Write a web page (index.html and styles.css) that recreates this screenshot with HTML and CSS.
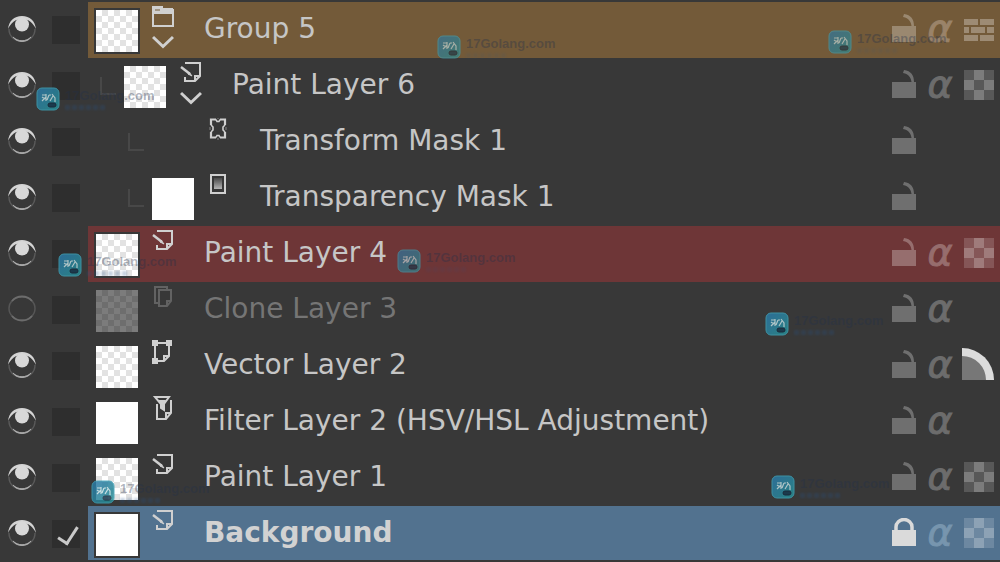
FILE: index.html
```html
<!DOCTYPE html>
<html lang="en">
<head>
<meta charset="utf-8">
<title>Layers</title>
<link rel="stylesheet" href="styles.css">
</head>
<body>
<svg class="defs" aria-hidden="true">
  <defs>
    <linearGradient id="fade" x1="0" y1="0" x2="0" y2="1"><stop offset="0" stop-color="#4a4a4a"/><stop offset="1" stop-color="#b5b5b5"/></linearGradient>
    <linearGradient id="badge" x1="0" y1="0" x2="1" y2="1"><stop offset="0" stop-color="#2c77a8"/><stop offset="1" stop-color="#278f91"/></linearGradient>
    <symbol id="eye" viewBox="0 0 28 28">
      <path d="M0 14C1 6 6 1 14 1s13 5 14 13C25 8 21 4 14 4S3 8 0 14z" fill="#d4d4d4"/>
      <path d="M1 14c0 7 5 12 13 12s13-5 13-12" fill="none" stroke="#5a5a5a" stroke-width="1.4"/>
      <path d="M5 22c5 5 13 5 18 0-4 6-14 6-18 0z" fill="#aaa" stroke="#aaa"/>
      <circle cx="14" cy="9.5" r="7" fill="#d8d8d8"/>
    </symbol>
    <symbol id="eye-off" viewBox="0 0 28 28">
      <ellipse cx="14" cy="13.5" rx="13" ry="11.8" fill="none" stroke="#565656" stroke-width="1.5"/>
      <path d="M4 6c5-6 15-6 20 0M4 21c5 6 15 6 20 0" fill="none" stroke="#6c6c6c" stroke-width="1.8"/>
    </symbol>
    <symbol id="group" viewBox="0 0 22 22">
      <path d="M1 4h20v16H1z" fill="none" stroke="currentColor" stroke-width="2"/>
      <path d="M0 0h11v2h10v6H0z" fill="currentColor"/>
      <path d="M3 4h5" stroke="#735a39" stroke-width="1"/>
    </symbol>
    <symbol id="paint" viewBox="0 0 22 22">
      <path d="M5 1h15v13l-5 5H5v-4M20 14h-5v5" fill="none" stroke="currentColor" stroke-width="2"/>
      <path d="M1 5l9 7" fill="none" stroke="currentColor" stroke-width="2.5"/>
      <path d="M9 10l3 4-4-2z" fill="currentColor" stroke="currentColor"/>
    </symbol>
    <symbol id="transform" viewBox="0 0 22 22">
      <path d="M8 1.500H3V7M3 14v5.500h5M12 19.500h5V14M17 7V1.500h-5" fill="none" stroke="currentColor" stroke-width="2.200"/>
      <path d="M8 1.500l1 2h2l1-2M8 19.500l1-2h2l1 2M3 7l2 2v3l-2 2M17 7l-2 2v3l2 2" fill="none" stroke="currentColor" stroke-width="1.600"/>
      <path d="M9 0h2M9 21h2M2 9v3M18 9v3" stroke="currentColor" stroke-width="1" opacity=".5"/>
    </symbol>
    <symbol id="transparency" viewBox="0 0 22 22">
      <path d="M3 1h14v18H3z" fill="none" stroke="currentColor" stroke-width="2"/>
      <path d="M6 4h8v11H6z" fill="url(#fade)"/>
    </symbol>
    <symbol id="clone" viewBox="0 0 22 22">
      <path d="M6 17H3V1h12v2M7 4h12v11l-4 5H7zM19 15h-4v5" fill="none" stroke="currentColor" stroke-width="2"/>
    </symbol>
    <symbol id="vector" viewBox="0 0 22 24">
      <path d="M3 3h14v13l-5 5H3zM17 16h-5v5" fill="none" stroke="currentColor" stroke-width="2"/>
      <path d="M0 0h6v6H0zM14 0h6v6h-6zM0 18h6v6H0z" fill="currentColor"/>
    </symbol>
    <symbol id="filter" viewBox="0 0 22 24">
      <path d="M5 8v15h9l5-6V4M19 17h-5v6" fill="none" stroke="currentColor" stroke-width="2"/>
      <path d="M3 1h14l-5 7v6l-3-2V8z" fill="none" stroke="currentColor" stroke-width="2"/>
      <path d="M6 4h8l-3 6v4l-2-2v-3z" fill="currentColor"/>
    </symbol>
    <symbol id="chevron" viewBox="0 0 22 14"><path d="M1 2l10 9.500L21 2" fill="none" stroke="currentColor" stroke-width="3"/></symbol>
    <symbol id="unlocked" viewBox="0 0 26 28">
      <path d="M1 12h19.500C20 8 18 4 12 3l1-3c7 1 10 5 10 12h2v16H1z" fill="currentColor"/>
    </symbol>
    <symbol id="locked" viewBox="0 0 26 28">
      <path d="M5 13V9a8 7.500 0 0 1 16 0v4" fill="none" stroke="currentColor" stroke-width="3.500"/>
      <path d="M1 12h24v16H1z" fill="currentColor"/>
    </symbol>
    <symbol id="checker" viewBox="0 0 32 32">
      <path d="M1 1h30v30H1z" fill="#fff" opacity=".16"/>
      <path d="M11 1h10v10H11zM1 11h10v10H1zM21 11h10v10H21zM11 21h10v10H11z" fill="#fff" opacity=".22"/>
    </symbol>
    <symbol id="bricks" viewBox="0 0 32 32">
      <path d="M1 6h14v6H1zM17 6h14v6H17zM1 14h5v6H1zM8 14h14v6H8zM24 14h7v6h-7zM1 22h14v6H1zM17 22h14v6H17z" fill="#fff" opacity=".3"/>
    </symbol>
    <symbol id="arc" viewBox="0 0 32 32">
      <path d="M0 0a32 32 0 0 1 32 32H0z" fill="#dcdcdc"/>
      <path d="M0 8a24 24 0 0 1 24 24H0z" fill="#777"/>
    </symbol>
    <symbol id="stamp" viewBox="0 0 24 24">
      <rect x="1" y="1" width="22" height="22" rx="5" fill="url(#badge)" stroke="#3fa0b4"/>
      <path d="M6 8h4M10 7v7M10 10l-4 4M6 10l3 2M13 8l-2 5M13 8h2M16 7l3 4v4M17 9l-3 5" fill="none" stroke="#c3dde0" stroke-width="1.200"/>
      <rect x="12" y="16" width="8" height="4" rx="2" fill="#173b50" stroke="#15283b"/>
    </symbol>
  </defs>
</svg>
<main class="panel">
  <ul class="layers">
    <li class="layer orange">
      <button class="eye" aria-label="Toggle Group 5"><svg><use href="#eye"/></svg></button>
      <input class="pick" type="checkbox" aria-label="Select Group 5">
      <div class="body"><span class="thumb checks"></span><span class="kind"><svg class="type"><use href="#group"/></svg><svg class="chevron"><use href="#chevron"/></svg></span><span class="name">Group 5</span>
        <button class="tool" aria-label="Lock"><svg><use href="#unlocked"/></svg></button><button class="tool alpha" aria-label="Inherit alpha">α</button><button class="tool channel" aria-label="Pass through"><svg><use href="#bricks"/></svg></button></div>
    </li>
    <li class="layer">
      <button class="eye" aria-label="Toggle Paint Layer 6"><svg><use href="#eye"/></svg></button>
      <input class="pick" type="checkbox" aria-label="Select Paint Layer 6">
      <div class="body level1"><span class="branch"></span><span class="thumb checks"></span><span class="kind"><svg class="type"><use href="#paint"/></svg><svg class="chevron"><use href="#chevron"/></svg></span><span class="name">Paint Layer 6</span>
        <button class="tool" aria-label="Lock"><svg><use href="#unlocked"/></svg></button><button class="tool alpha" aria-label="Inherit alpha">α</button><button class="tool channel" aria-label="Alpha lock"><svg><use href="#checker"/></svg></button></div>
    </li>
    <li class="layer">
      <button class="eye" aria-label="Toggle Transform Mask 1"><svg><use href="#eye"/></svg></button>
      <input class="pick" type="checkbox" aria-label="Select Transform Mask 1">
      <div class="body level2"><span class="branch"></span><span class="thumb empty"></span><span class="kind"><svg class="type"><use href="#transform"/></svg></span><span class="name">Transform Mask 1</span>
        <button class="tool" aria-label="Lock"><svg><use href="#unlocked"/></svg></button><span class="tool alpha"></span><span class="tool channel"></span></div>
    </li>
    <li class="layer">
      <button class="eye" aria-label="Toggle Transparency Mask 1"><svg><use href="#eye"/></svg></button>
      <input class="pick" type="checkbox" aria-label="Select Transparency Mask 1">
      <div class="body level2"><span class="branch"></span><span class="thumb"></span><span class="kind"><svg class="type"><use href="#transparency"/></svg></span><span class="name">Transparency Mask 1</span>
        <button class="tool" aria-label="Lock"><svg><use href="#unlocked"/></svg></button><span class="tool alpha"></span><span class="tool channel"></span></div>
    </li>
    <li class="layer red">
      <button class="eye" aria-label="Toggle Paint Layer 4"><svg><use href="#eye"/></svg></button>
      <input class="pick" type="checkbox" aria-label="Select Paint Layer 4">
      <div class="body"><span class="thumb checks"></span><span class="kind"><svg class="type"><use href="#paint"/></svg></span><span class="name">Paint Layer 4</span>
        <button class="tool" aria-label="Lock"><svg><use href="#unlocked"/></svg></button><button class="tool alpha" aria-label="Inherit alpha">α</button><button class="tool channel" aria-label="Alpha lock"><svg><use href="#checker"/></svg></button></div>
    </li>
    <li class="layer hidden-layer">
      <button class="eye" aria-label="Toggle Clone Layer 3"><svg><use href="#eye-off"/></svg></button>
      <input class="pick" type="checkbox" aria-label="Select Clone Layer 3">
      <div class="body"><span class="thumb checks dim"></span><span class="kind"><svg class="type"><use href="#clone"/></svg></span><span class="name">Clone Layer 3</span>
        <button class="tool" aria-label="Lock"><svg><use href="#unlocked"/></svg></button><button class="tool alpha" aria-label="Inherit alpha">α</button><span class="tool channel"></span></div>
    </li>
    <li class="layer">
      <button class="eye" aria-label="Toggle Vector Layer 2"><svg><use href="#eye"/></svg></button>
      <input class="pick" type="checkbox" aria-label="Select Vector Layer 2">
      <div class="body"><span class="thumb checks"></span><span class="kind"><svg class="type tall"><use href="#vector"/></svg></span><span class="name">Vector Layer 2</span>
        <button class="tool" aria-label="Lock"><svg><use href="#unlocked"/></svg></button><button class="tool alpha" aria-label="Inherit alpha">α</button><button class="tool channel arc" aria-label="Antialiasing"><svg><use href="#arc"/></svg></button></div>
    </li>
    <li class="layer">
      <button class="eye" aria-label="Toggle Filter Layer 2"><svg><use href="#eye"/></svg></button>
      <input class="pick" type="checkbox" aria-label="Select Filter Layer 2">
      <div class="body"><span class="thumb"></span><span class="kind"><svg class="type tall"><use href="#filter"/></svg></span><span class="name">Filter Layer 2 (HSV/HSL Adjustment)</span>
        <button class="tool" aria-label="Lock"><svg><use href="#unlocked"/></svg></button><button class="tool alpha" aria-label="Inherit alpha">α</button><span class="tool channel"></span></div>
    </li>
    <li class="layer">
      <button class="eye" aria-label="Toggle Paint Layer 1"><svg><use href="#eye"/></svg></button>
      <input class="pick" type="checkbox" aria-label="Select Paint Layer 1">
      <div class="body"><span class="thumb checks"></span><span class="kind"><svg class="type"><use href="#paint"/></svg></span><span class="name">Paint Layer 1</span>
        <button class="tool" aria-label="Lock"><svg><use href="#unlocked"/></svg></button><button class="tool alpha" aria-label="Inherit alpha">α</button><button class="tool channel" aria-label="Alpha lock"><svg><use href="#checker"/></svg></button></div>
    </li>
    <li class="layer blue">
      <button class="eye" aria-label="Toggle Background"><svg><use href="#eye"/></svg></button>
      <input class="pick" type="checkbox" aria-label="Select Background" checked>
      <div class="body"><span class="thumb"></span><span class="kind"><svg class="type"><use href="#paint"/></svg></span><span class="name">Background</span>
        <button class="tool on" aria-label="Unlock"><svg><use href="#locked"/></svg></button><button class="tool alpha" aria-label="Inherit alpha">α</button><button class="tool channel" aria-label="Alpha lock"><svg><use href="#checker"/></svg></button></div>
    </li>
  </ul>
  <div class="mark m1"><svg><use href="#stamp"/></svg><span>17Golang.com</span></div>
  <div class="mark m2"><svg><use href="#stamp"/></svg><span>17Golang.com</span></div>
  <div class="mark m3"><svg><use href="#stamp"/></svg><span>17Golang.com</span></div>
  <div class="mark m4"><svg><use href="#stamp"/></svg><span>17Golang.com</span></div>
  <div class="mark m5"><svg><use href="#stamp"/></svg><span>17Golang.com</span></div>
  <div class="mark m6"><svg><use href="#stamp"/></svg><span>17Golang.com</span></div>
  <div class="mark m7"><svg><use href="#stamp"/></svg><span>17Golang.com</span></div>
  <div class="mark m8"><svg><use href="#stamp"/></svg><span>17Golang.com</span></div>
</main>
</body>
</html>
```
FILE: styles.css
```css
* { box-sizing: border-box; }
body { margin: 0; background: #383838; color: #c6c6c6; font-family: "DejaVu Sans", sans-serif; }
button { border: 0; padding: 0; margin: 0; background: none; color: inherit; font: inherit; }
svg { display: block; width: 100%; height: 100%; }
.defs { position: absolute; width: 0; height: 0; }
.panel { position: relative; overflow: hidden; padding-top: 2px; }
.layers { list-style: none; margin: 0; padding: 0; }
.layer { display: flex; align-items: flex-start; height: 56px; padding-left: 8px; }
.layer:last-child { height: 54px; margin-bottom: 2px; }
.eye { width: 28px; height: 28px; margin: 13px 16px 0 0; flex: none; }
.pick { appearance: none; width: 28px; height: 28px; margin: 14px 8px 0 0; flex: none; background: #2e2e2e; }
.pick:checked::after { content: ""; display: block; width: 9px; height: 18px; margin: 3px 0 0 10px; border: solid #c9c9c9; border-width: 0 3px 3px 0; transform: rotate(33deg); }
.body { position: relative; flex: 1; min-width: 0; height: 100%; display: flex; align-items: flex-start; padding: 0 5px 0 8px; }
.level1 { padding-left: 36px; }
.level2 { padding-left: 64px; }
.branch { position: absolute; top: 19px; left: 12px; width: 16px; height: 18px; border: solid #484848; border-width: 0 0 2px 2px; }
.level2 .branch { left: 40px; }
.thumb { width: 42px; height: 42px; margin: 8px 14px 0 0; flex: none; background: #fff; }
.checks { background: repeating-conic-gradient(#e2e2e2 0 25%, #fff 0 50%) 0 0 / 12px 12px; }
.dim { background: repeating-conic-gradient(#6e6e6e 0 25%, #7c7c7c 0 50%) 0 0 / 12px 12px; }
.empty { visibility: hidden; }
.kind { width: 22px; height: 52px; margin-right: 30px; padding-top: 4px; flex: none; color: #d0d0d0; }
.type { width: 22px; height: 22px; }
.tall { height: 24px; margin-top: -2px; }
.chevron { height: 14px; margin-top: 7px; }
.name { flex: 1; min-width: 0; font-size: 28px; line-height: 54px; white-space: nowrap; }
.tool { width: 26px; height: 28px; margin: 12px 10px 0 0; flex: none; color: rgba(255, 255, 255, .28); }
.on { color: #dadada; }
.alpha { font-size: 38px; font-style: italic; line-height: 26px; text-align: center; -webkit-text-stroke: 1px #6c6c6c; color: #6c6c6c; }
.orange .alpha { color: #9a8369; -webkit-text-stroke-color: #9a8369; }
.red .alpha { color: #966d6d; -webkit-text-stroke-color: #966d6d; }
.blue .alpha { color: #7795ae; -webkit-text-stroke-color: #7795ae; }
.channel { width: 32px; height: 32px; margin: 11px 0 0; }
.arc { margin: 10px 1px 0 -1px; }
.orange .body { background: #735a39; }
.red .body { background: #6e3637; }
.blue .body { background: #52728f; }
.orange .thumb, .red .thumb, .blue .thumb { box-shadow: 0 0 0 2px #383838; }
.hidden-layer .name { color: #757575; }
.hidden-layer .kind { color: #626262; }
.blue .name { font-weight: bold; color: #d2d2d2; }
.mark { position: absolute; display: flex; gap: 5px; pointer-events: none; }
.mark svg { width: 24px; height: 24px; opacity: .85; }
.mark span { font: bold 13px/18px "Liberation Sans", sans-serif; color: rgba(34, 48, 74, .36); }
.mark span::after { content: ""; display: block; width: 40px; height: 5px; background: repeating-linear-gradient(90deg, rgba(40, 85, 140, .26) 0 5px, transparent 5px 7px); filter: blur(1px); }
.m1 { left: 437px; top: 35px; }
.m2 { left: 828px; top: 30px; }
.m3 { left: 36px; top: 87px; }
.m4 { left: 58px; top: 253px; }
.m5 { left: 397px; top: 249px; }
.m6 { left: 765px; top: 312px; }
.m7 { left: 91px; top: 480px; }
.m8 { left: 771px; top: 475px; }
.m1 svg, .m2 svg, .m5 svg { opacity: .65; }
.m1 span::after, .m2 span::after, .m5 span::after { opacity: .4; }
```
